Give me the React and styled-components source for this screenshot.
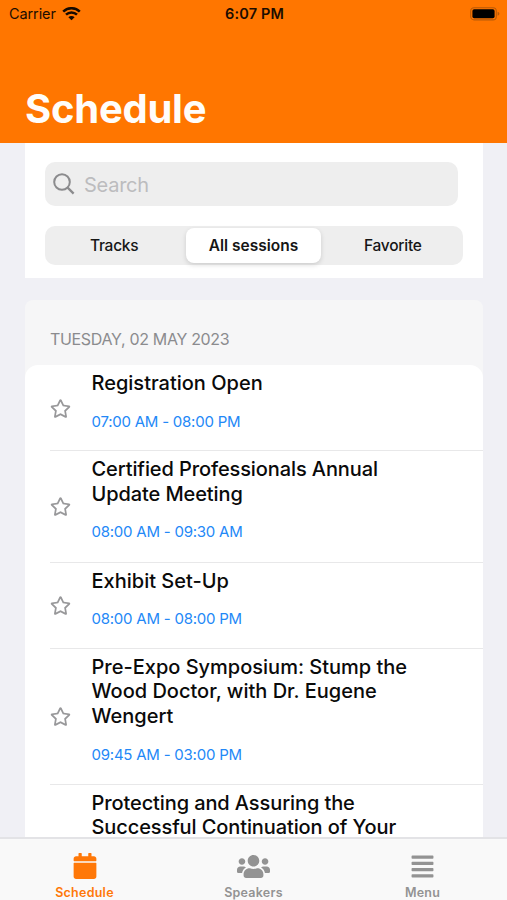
import React, { useState } from "react";
// Styling and Icons
import styled, { createGlobalStyle } from "styled-components";
import { FaAlignJustify, FaCalendar, FaRegStar, FaStar, FaUsers } from "react-icons/fa";

const sessions = [
  { title: ["Registration Open"], time: "07:00 AM - 08:00 PM", height: 86 },
  {
    title: ["Certified Professionals Annual", "Update Meeting"],
    time: "08:00 AM - 09:30 AM",
    height: 111.5,
    tracking: -0.1,
  },
  { title: ["Exhibit Set-Up"], time: "08:00 AM - 08:00 PM", height: 86 },
  {
    title: ["Pre-Expo Symposium: Stump the", "Wood Doctor, with Dr. Eugene", "Wengert"],
    time: "09:45 AM - 03:00 PM",
    height: 136,
  },
  {
    title: ["Protecting and Assuring the", "Successful Continuation of Your"],
    height: 136,
    tracking: -0.1,
  },
];

const filters = ["Tracks", "All sessions", "Favorite"];

const tabs = [
  { name: "Schedule", icon: FaCalendar, size: 26 },
  { name: "Speakers", icon: FaUsers, size: 33 },
  { name: "Menu", icon: FaAlignJustify, size: 25 },
];

function StatusBar() {
  return (
    <Status>
      <Carrier>
        Carrier
        <svg width="19" height="14" viewBox="0 0 19 14">
          <path d="M9.5 13.2 L6.4 10.3 A4.3 4.3 0 0 1 12.6 10.3 Z" fill="#160a00" />
          <path
            d="M1.2 4.6 A11.9 11.9 0 0 1 17.8 4.6 M4 7.7 A7.8 7.8 0 0 1 15 7.7"
            fill="none"
            stroke="#160a00"
            strokeWidth="2.5"
          />
        </svg>
      </Carrier>
      <Clock>6:07 PM</Clock>
      <Battery>
        <svg width="30" height="14" viewBox="0 0 30 14">
          <rect x="0.7" y="0.7" width="25.6" height="12.2" rx="3.4" fill="none" stroke="#b85a08" strokeWidth="1.1" />
          <rect x="2.4" y="2.3" width="22.2" height="9" rx="1.8" fill="#000" />
          <path d="M27.6 4.8 Q29.4 5.3 29.4 6.8 Q29.4 8.3 27.6 8.8 Z" fill="#b85a08" />
        </svg>
      </Battery>
    </Status>
  );
}

function Session({ session }) {
  const [favorite, setFavorite] = useState(false);

  return (
    <SessionRow $height={session.height}>
      <StarButton onClick={() => setFavorite(!favorite)}>
        {favorite ? <FaStar /> : <FaRegStar />}
      </StarButton>
      <SessionInfo>
        <SessionTitle $tracking={session.tracking}>
          {session.title.map((line) => (
            <div key={line}>{line}</div>
          ))}
        </SessionTitle>
        {session.time && <SessionTime>{session.time}</SessionTime>}
      </SessionInfo>
    </SessionRow>
  );
}

function App() {
  const [filter, setFilter] = useState("All sessions");
  const [tab, setTab] = useState("Schedule");

  return (
    <Screen>
      <GlobalStyle />
      <Header>
        <StatusBar />
        <PageTitle>Schedule</PageTitle>
      </Header>
      <Content>
        <FilterCard>
          <SearchBox>
            <svg width="22" height="22" viewBox="0 0 22 22" fill="none" stroke="#8b8b8d" strokeWidth="2">
              <circle cx="9" cy="9" r="7.8" />
              <path d="M14.6 14.6 L20.6 20.6" strokeWidth="2.3" />
            </svg>
            <SearchInput placeholder="Search" />
          </SearchBox>
          <Segments>
            {filters.map((name) => (
              <Segment key={name} $active={name === filter} onClick={() => setFilter(name)}>
                {name}
              </Segment>
            ))}
          </Segments>
        </FilterCard>
        <DaySection>
          <DayHeader>TUESDAY, 02 MAY 2023</DayHeader>
          <SessionList>
            {sessions.map((session) => (
              <Session session={session} key={session.title[0]} />
            ))}
          </SessionList>
        </DaySection>
      </Content>
      <TabBar>
        {tabs.map(({ name, icon: Icon, size }) => (
          <Tab key={name} $active={name === tab} onClick={() => setTab(name)}>
            <TabIcon>
              <Icon size={size} />
            </TabIcon>
            {name}
          </Tab>
        ))}
      </TabBar>
    </Screen>
  );
}

const GlobalStyle = createGlobalStyle`
  * {
    box-sizing: border-box;
  }
  body {
    margin: 0;
    font-family: Inter, "Liberation Sans", sans-serif;
  }
  button, input {
    font-family: inherit;
    border: none;
    padding: 0;
    background: none;
  }
`;

const Screen = styled.div`
  width: 507px;
  height: 900px;
  display: flex;
  flex-direction: column;
  overflow: hidden;
  background: #f0f0f5;
`;

const Header = styled.header`
  height: 143px;
  flex-shrink: 0;
  display: flex;
  flex-direction: column;
  justify-content: space-between;
  background: #ff7600;
`;

const Status = styled.div`
  height: 27px;
  padding: 0 7px 0 9px;
  display: grid;
  grid-template-columns: 1fr auto 1fr;
  align-items: center;
  color: #1c0d00;
`;

const Carrier = styled.div`
  display: flex;
  align-items: center;
  gap: 6px;
  font-size: 14.5px;
  letter-spacing: -0.1px;
`;

const Clock = styled.div`
  font-size: 14.5px;
  font-weight: 600;
  letter-spacing: 0.15px;
`;

const Battery = styled.div`
  display: flex;
  justify-content: flex-end;
`;

const PageTitle = styled.h1`
  margin: 0;
  padding: 0 25px 10px;
  font-size: 40px;
  line-height: 48px;
  font-weight: 700;
  letter-spacing: -0.25px;
  color: #fffdfa;
`;

const Content = styled.main`
  flex: 1;
  min-height: 0;
  overflow: hidden;
  padding: 0 24px 0 25px;
`;

const FilterCard = styled.section`
  height: 135px;
  padding: 19px 20px 0;
  background: #ffffff;
`;

const SearchBox = styled.div`
  height: 44px;
  margin-right: 5px;
  padding-left: 8px;
  display: flex;
  align-items: center;
  gap: 9px;
  border-radius: 10px;
  background: #eeeeee;
`;

const SearchInput = styled.input`
  flex: 1;
  min-width: 0;
  padding-top: 2px;
  outline: none;
  font-size: 20px;
  letter-spacing: -0.25px;
  color: #000000;
  &::placeholder {
    color: #bcbcbe;
    opacity: 1;
  }
`;

const Segments = styled.div`
  height: 39px;
  margin-top: 20px;
  display: grid;
  grid-template-columns: repeat(3, 1fr);
  border-radius: 10px;
  background: #eeeeee;
`;

const Segment = styled.button`
  margin: 2px 3px 2px 2px;
  border-radius: 8px;
  font-size: 15.5px;
  font-weight: ${(props) => (props.$active ? 600 : 500)};
  letter-spacing: ${(props) => (props.$active ? "0" : "-0.25px")};
  color: #161616;
  background: ${(props) => (props.$active ? "#ffffff" : "transparent")};
  box-shadow: ${(props) => (props.$active ? "0 2px 5px rgba(0, 0, 0, 0.14)" : "none")};
`;

const DaySection = styled.section`
  margin-top: 22px;
  border-radius: 8px 8px 0 0;
  background: #f6f6f7;
`;

const DayHeader = styled.div`
  height: 65.2px;
  padding: 29px 25px 0;
  font-size: 16px;
  line-height: 20px;
  letter-spacing: -0.33px;
  color: #8b8b8e;
`;

const SessionList = styled.div`
  border-radius: 13px 13px 0 0;
  background: #ffffff;
`;

const SessionRow = styled.div`
  height: ${(props) => props.$height}px;
  margin-left: 25px;
  display: flex;
  align-items: center;
  border-bottom: 1px solid #e8e8e9;
`;

const StarButton = styled.button`
  width: 41.5px;
  flex-shrink: 0;
  padding-top: 1px;
  display: flex;
  font-size: 21px;
  color: #98989a;
`;

const SessionInfo = styled.div`
  align-self: flex-start;
  padding-top: 6px;
  white-space: nowrap;
`;

const SessionTitle = styled.div`
  font-size: 20px;
  line-height: 24.8px;
  font-weight: 500;
  letter-spacing: ${(props) => props.$tracking || 0}px;
  color: #0a0a0a;
`;

const SessionTime = styled.div`
  margin-top: 15.6px;
  font-size: 15px;
  line-height: 20px;
  letter-spacing: -0.23px;
  color: #2388f7;
`;

const TabBar = styled.nav`
  height: 63px;
  flex-shrink: 0;
  display: grid;
  grid-template-columns: repeat(3, 1fr);
  border-top: 2px solid #e3e3e6;
  background: #f9f9f9;
`;

const Tab = styled.button`
  display: flex;
  flex-direction: column;
  align-items: center;
  font-size: 12.5px;
  line-height: 16px;
  font-weight: 600;
  letter-spacing: 0.25px;
  color: ${(props) => (props.$active ? "#ff7808" : "#939393")};
`;

const TabIcon = styled.span`
  height: 32px;
  margin: 11px 0 3px;
  display: flex;
  align-items: center;
`;

export default App;
